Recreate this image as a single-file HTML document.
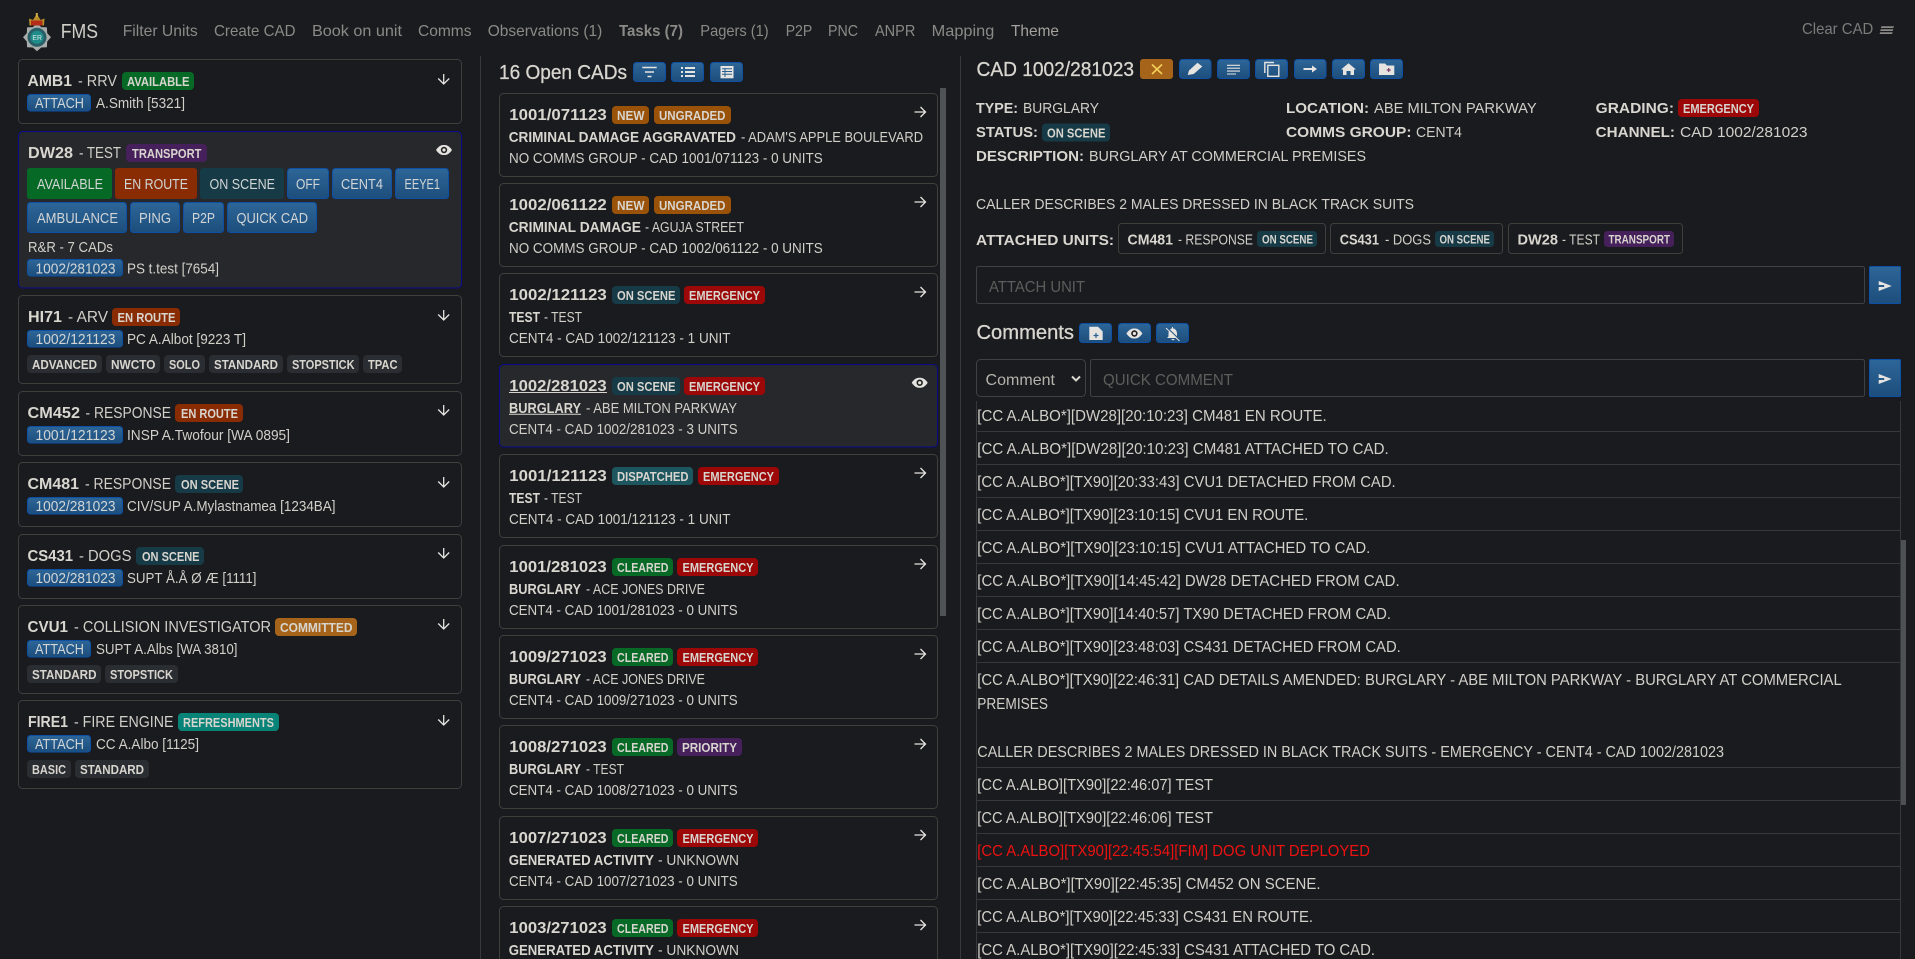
<!DOCTYPE html>
<html lang="en"><head><meta charset="utf-8"><title>FMS</title>
<style>
html,body{margin:0;padding:0;background:#191b1e;width:1915px;height:959px;overflow:hidden}
svg{display:block}
text{font-family:"Liberation Sans",sans-serif;fill:#d2cfc9;font-size:15px;white-space:pre}
.b{font-weight:700;fill:#d9d6d0}
.h{font-size:16px}
.hb{font-size:16px;font-weight:700;fill:#d9d6d0}
.n{font-size:16px;fill:#8b8a86}
.bt{font-size:14.5px;fill:#d2d5d6}
.bd{font-size:12.5px;font-weight:700;fill:#d8d5cf}
.bs{font-size:11.5px;font-weight:700;fill:#d8d5cf}
.c{font-size:15.5px}
.t{font-size:20px;stroke:#d9d6d0;stroke-width:.3;fill:#d9d6d0}
.ph{font-size:16px;fill:#5d5d5b}
.cd{fill:none;stroke:#3f3f3b}
.sel{fill:#26282b;stroke:#0a0a8a}
.bl{fill:url(#blg);stroke:#0d50a5}
.ic{fill:none;stroke:#e6e4e0;stroke-width:1.3}
.sp{stroke:#36393c;fill:none}
.gr{fill:#066a26}.or{fill:#9a5208}.te{fill:#163a46}.re{fill:#9c0707}.di{fill:#1e5660}.pu{fill:#45205a}.co{fill:#a5641a}.rf{fill:#078377}.er{fill:#8a2c03}.ch{fill:#2a2d31}
</style></head><body>
<svg xmlns="http://www.w3.org/2000/svg" width="1915" height="959" viewBox="0 0 1915 959">
<defs>
<linearGradient id="blg" x1="0" y1="0" x2="0" y2="1"><stop offset="0" stop-color="#2d6698"/><stop offset="1" stop-color="#1d4e7c"/></linearGradient>
<g id="ad" class="ic"><path d="M0-5V5M-5.5-.5L0 5L5.5-.5"/></g>
<g id="ar" class="ic"><path d="M-5.5 0H5.5M.5-5L5.5 0L.5 5"/></g>
<g id="ey"><path d="M-8 0C-5-4.5-2.5-5-0-5S5-4.5 8 0C5 4.5 2.5 5 0 5S-5 4.5-8 0Z" fill="#e6e4e0"/><circle r="3.2" fill="#222"/><circle r="1.6" fill="#e6e4e0"/></g>
<g id="sn"><path d="M-6.5-5L6.5 0L-6.5 5L-6.5 1H-1V-1H-6.5Z" fill="#e6e4e0"/></g>
</defs>
<rect width="1915" height="959" fill="#191b1e"/>

<!-- logo -->
<polygon points="51,37.3 47.2,41.5 46.9,47.2 41.2,47.5 37,51.3 32.8,47.5 27.1,47.2 26.8,41.5 23,37.3 26.8,33.1 27.1,27.4 32.8,27.1 37,23.3 41.2,27.1 46.9,27.4 47.2,33.1" fill="#a9adab"/>
<circle cx="37" cy="37.3" r="9.5" fill="#2a5f68"/><circle cx="37" cy="37.3" r="6.5" fill="#1f8d8a"/>
<text x="32.4" y="40" textLength="9.5" lengthAdjust="spacingAndGlyphs" style="font-size:7.5px;fill:#dfe8e8">ER</text>
<path d="M29.5 25.5L29 18.5L33 20L36.8 14L40.6 20L44.5 18.5L44 25.5Z" fill="#b8902a"/><path d="M31 25.5V20.5H42.5V25.5Z" fill="#b52c18"/><rect x="35.8" y="13" width="2" height="4" fill="#d4b04a"/>
<text x="60.7" y="38" textLength="37.3" lengthAdjust="spacingAndGlyphs" style="font-size:20px">FMS</text>

<!-- nav -->
<text class="n" x="122.7" y="36" textLength="75" lengthAdjust="spacingAndGlyphs">Filter Units</text>
<text class="n" x="214" y="36" textLength="81.5" lengthAdjust="spacingAndGlyphs">Create CAD</text>
<text class="n" x="312" y="36" textLength="90" lengthAdjust="spacingAndGlyphs">Book on unit</text>
<text class="n" x="418" y="36" textLength="53.5" lengthAdjust="spacingAndGlyphs">Comms</text>
<text class="n" x="487.7" y="36" textLength="114.6" lengthAdjust="spacingAndGlyphs">Observations (1)</text>
<text class="n b" x="619" y="36" textLength="64" lengthAdjust="spacingAndGlyphs" style="fill:#8b8a86">Tasks (7)</text>
<text class="n" x="700.3" y="36" textLength="68.4" lengthAdjust="spacingAndGlyphs">Pagers (1)</text>
<text class="n" x="785.7" y="36" textLength="26.5" lengthAdjust="spacingAndGlyphs">P2P</text>
<text class="n" x="828" y="36" textLength="30" lengthAdjust="spacingAndGlyphs">PNC</text>
<text class="n" x="875" y="36" textLength="40.3" lengthAdjust="spacingAndGlyphs">ANPR</text>
<text class="n" x="931.7" y="36" textLength="62.6" lengthAdjust="spacingAndGlyphs">Mapping</text>
<text class="n" x="1011" y="36" textLength="48" lengthAdjust="spacingAndGlyphs" style="fill:#a5a29d">Theme</text>
<text class="n" x="1802" y="34" textLength="71.3" lengthAdjust="spacingAndGlyphs" style="fill:#7b7b7a">Clear CAD</text>
<path d="M1881.5 26.2H1894L1893.3 28H1880.8ZM1880.8 29.2H1893.3L1892.6 31H1880.1ZM1880.2 32.2H1892.7L1892 34H1879.5Z" fill="#8b8a86"/>

<!-- dividers -->
<path class="sp" d="M480.5 56V959M960.5 56V959"/>

<!-- LEFT: UNITS -->
<rect class="cd" x="18.5" y="59.5" width="443" height="64" rx="4"/>
<text class="hb" x="27.5" y="86" textLength="44.5" lengthAdjust="spacingAndGlyphs">AMB1</text>
<text class="h" x="78" y="86" textLength="39" lengthAdjust="spacingAndGlyphs">- RRV</text>
<rect class="gr" x="122" y="72" width="72" height="18" rx="4"/><text class="bd" x="127" y="86" textLength="62.5" lengthAdjust="spacingAndGlyphs">AVAILABLE</text>
<rect class="bl" x="27.5" y="94.5" width="63" height="16.5" rx="3"/><text class="bt" x="35" y="108" textLength="49" lengthAdjust="spacingAndGlyphs">ATTACH</text>
<text x="96" y="108" textLength="89" lengthAdjust="spacingAndGlyphs">A.Smith [5321]</text>
<use href="#ad" x="443.7" y="79"/>

<rect class="sel" x="18.5" y="131.5" width="443" height="156.5" rx="4"/>
<text class="hb" x="28" y="158" textLength="45" lengthAdjust="spacingAndGlyphs">DW28</text>
<text class="h" x="79" y="158" textLength="42" lengthAdjust="spacingAndGlyphs">- TEST</text>
<rect class="pu" x="126" y="144" width="81" height="18" rx="4"/><text class="bd" x="132" y="158" textLength="69.5" lengthAdjust="spacingAndGlyphs">TRANSPORT</text>
<use href="#ey" x="444" y="150"/>
<rect class="gr" x="27" y="168" width="85" height="31" rx="3"/><text class="bt" x="37" y="189" textLength="66" lengthAdjust="spacingAndGlyphs">AVAILABLE</text>
<rect class="er" x="115" y="168" width="82" height="31" rx="3"/><text class="bt" x="124" y="189" textLength="64" lengthAdjust="spacingAndGlyphs">EN ROUTE</text>
<rect class="te" x="200" y="168" width="84" height="31" rx="3"/><text class="bt" x="209.5" y="189" textLength="65.5" lengthAdjust="spacingAndGlyphs">ON SCENE</text>
<rect class="bl" x="287.5" y="168.5" width="41" height="30" rx="3"/><text class="bt" x="296" y="189" textLength="24" lengthAdjust="spacingAndGlyphs">OFF</text>
<rect class="bl" x="332.5" y="168.5" width="59" height="30" rx="3"/><text class="bt" x="341" y="189" textLength="42" lengthAdjust="spacingAndGlyphs">CENT4</text>
<rect class="bl" x="395.5" y="168.5" width="53" height="30" rx="3"/><text class="bt" x="404.5" y="189" textLength="35.5" lengthAdjust="spacingAndGlyphs">EEYE1</text>
<rect class="bl" x="27.5" y="202.5" width="99" height="30" rx="3"/><text class="bt" x="37" y="223" textLength="81" lengthAdjust="spacingAndGlyphs">AMBULANCE</text>
<rect class="bl" x="130.5" y="202.5" width="49" height="30" rx="3"/><text class="bt" x="139" y="223" textLength="32" lengthAdjust="spacingAndGlyphs">PING</text>
<rect class="bl" x="183.5" y="202.5" width="40" height="30" rx="3"/><text class="bt" x="192" y="223" textLength="23" lengthAdjust="spacingAndGlyphs">P2P</text>
<rect class="bl" x="227.5" y="202.5" width="89" height="30" rx="3"/><text class="bt" x="236.5" y="223" textLength="71.5" lengthAdjust="spacingAndGlyphs">QUICK CAD</text>
<text x="28" y="252" textLength="85" lengthAdjust="spacingAndGlyphs">R&amp;R - 7 CADs</text>
<rect class="bl" x="27.5" y="259.5" width="95" height="16.5" rx="3"/><text class="bt" x="35.5" y="273.5" textLength="80" lengthAdjust="spacingAndGlyphs">1002/281023</text>
<text x="127" y="273.5" textLength="92" lengthAdjust="spacingAndGlyphs">PS t.test [7654]</text>

<rect class="cd" x="18.5" y="295.5" width="443" height="88" rx="4"/>
<text class="hb" x="28" y="322" textLength="34" lengthAdjust="spacingAndGlyphs">HI71</text>
<text class="h" x="68" y="322" textLength="40" lengthAdjust="spacingAndGlyphs">- ARV</text>
<rect class="er" x="112" y="308" width="68" height="18" rx="4"/><text class="bd" x="117.5" y="322" textLength="58" lengthAdjust="spacingAndGlyphs">EN ROUTE</text>
<use href="#ad" x="443.7" y="315"/>
<rect class="bl" x="27.5" y="330.5" width="95" height="16.5" rx="3"/><text class="bt" x="35.5" y="344" textLength="80" lengthAdjust="spacingAndGlyphs">1002/121123</text>
<text x="127" y="344" textLength="119" lengthAdjust="spacingAndGlyphs">PC A.Albot [9223 T]</text>
<rect class="ch" x="27" y="355" width="75" height="18" rx="4"/><text class="bd" x="32" y="369" textLength="65" lengthAdjust="spacingAndGlyphs">ADVANCED</text>
<rect class="ch" x="106" y="355" width="54" height="18" rx="4"/><text class="bd" x="111" y="369" textLength="44.5" lengthAdjust="spacingAndGlyphs">NWCTO</text>
<rect class="ch" x="164" y="355" width="41" height="18" rx="4"/><text class="bd" x="169" y="369" textLength="31" lengthAdjust="spacingAndGlyphs">SOLO</text>
<rect class="ch" x="209" y="355" width="74" height="18" rx="4"/><text class="bd" x="214" y="369" textLength="64" lengthAdjust="spacingAndGlyphs">STANDARD</text>
<rect class="ch" x="287" y="355" width="72" height="18" rx="4"/><text class="bd" x="292" y="369" textLength="62.5" lengthAdjust="spacingAndGlyphs">STOPSTICK</text>
<rect class="ch" x="363" y="355" width="39" height="18" rx="4"/><text class="bd" x="368" y="369" textLength="29.5" lengthAdjust="spacingAndGlyphs">TPAC</text>

<rect class="cd" x="18.5" y="391.5" width="443" height="64" rx="4"/>
<text class="hb" x="27.5" y="418" textLength="52.5" lengthAdjust="spacingAndGlyphs">CM452</text>
<text class="h" x="85.5" y="418" textLength="85.5" lengthAdjust="spacingAndGlyphs">- RESPONSE</text>
<rect class="er" x="175" y="404" width="68" height="18" rx="4"/><text class="bd" x="181" y="418" textLength="57" lengthAdjust="spacingAndGlyphs">EN ROUTE</text>
<use href="#ad" x="443.7" y="410"/>
<rect class="bl" x="27.5" y="426.5" width="95" height="16.5" rx="3"/><text class="bt" x="35.5" y="440" textLength="80" lengthAdjust="spacingAndGlyphs">1001/121123</text>
<text x="127" y="440" textLength="163" lengthAdjust="spacingAndGlyphs">INSP A.Twofour [WA 0895]</text>

<rect class="cd" x="18.5" y="462.5" width="443" height="64" rx="4"/>
<text class="hb" x="27.5" y="489" textLength="51.5" lengthAdjust="spacingAndGlyphs">CM481</text>
<text class="h" x="85" y="489" textLength="86" lengthAdjust="spacingAndGlyphs">- RESPONSE</text>
<rect class="te" x="175" y="475" width="68" height="18" rx="4"/><text class="bd" x="181" y="489" textLength="58" lengthAdjust="spacingAndGlyphs">ON SCENE</text>
<use href="#ad" x="443.7" y="482"/>
<rect class="bl" x="27.5" y="497.5" width="95" height="16.5" rx="3"/><text class="bt" x="35.5" y="511" textLength="80" lengthAdjust="spacingAndGlyphs">1002/281023</text>
<text x="127" y="511" textLength="208.5" lengthAdjust="spacingAndGlyphs">CIV/SUP A.Mylastnamea [1234BA]</text>

<rect class="cd" x="18.5" y="534.5" width="443" height="64" rx="4"/>
<text class="hb" x="27.5" y="561" textLength="45.5" lengthAdjust="spacingAndGlyphs">CS431</text>
<text class="h" x="79" y="561" textLength="52.5" lengthAdjust="spacingAndGlyphs">- DOGS</text>
<rect class="te" x="136" y="547" width="68" height="18" rx="4"/><text class="bd" x="142" y="561" textLength="57.5" lengthAdjust="spacingAndGlyphs">ON SCENE</text>
<use href="#ad" x="443.7" y="553"/>
<rect class="bl" x="27.5" y="569.5" width="95" height="16.5" rx="3"/><text class="bt" x="35.5" y="583" textLength="80" lengthAdjust="spacingAndGlyphs">1002/281023</text>
<text x="127" y="583" textLength="129.5" lengthAdjust="spacingAndGlyphs">SUPT Å.Å Ø Æ [1111]</text>

<rect class="cd" x="18.5" y="605.5" width="443" height="88" rx="4"/>
<text class="hb" x="27.5" y="632" textLength="40.5" lengthAdjust="spacingAndGlyphs">CVU1</text>
<text class="h" x="74" y="632" textLength="197" lengthAdjust="spacingAndGlyphs">- COLLISION INVESTIGATOR</text>
<rect class="co" x="275" y="618" width="82" height="18" rx="4"/><text class="bd" x="280" y="632" textLength="72.5" lengthAdjust="spacingAndGlyphs">COMMITTED</text>
<use href="#ad" x="443.7" y="624"/>
<rect class="bl" x="27.5" y="640.5" width="63" height="16.5" rx="3"/><text class="bt" x="35" y="654" textLength="49" lengthAdjust="spacingAndGlyphs">ATTACH</text>
<text x="96" y="654" textLength="141.5" lengthAdjust="spacingAndGlyphs">SUPT A.Albs [WA 3810]</text>
<rect class="ch" x="27" y="665" width="74" height="18" rx="4"/><text class="bd" x="32" y="679" textLength="64.5" lengthAdjust="spacingAndGlyphs">STANDARD</text>
<rect class="ch" x="105" y="665" width="73" height="18" rx="4"/><text class="bd" x="110" y="679" textLength="63" lengthAdjust="spacingAndGlyphs">STOPSTICK</text>

<rect class="cd" x="18.5" y="700.5" width="443" height="88" rx="4"/>
<text class="hb" x="28" y="727" textLength="40" lengthAdjust="spacingAndGlyphs">FIRE1</text>
<text class="h" x="74" y="727" textLength="99.5" lengthAdjust="spacingAndGlyphs">- FIRE ENGINE</text>
<rect class="rf" x="178" y="713" width="101" height="18" rx="4"/><text class="bd" x="183" y="727" textLength="91" lengthAdjust="spacingAndGlyphs">REFRESHMENTS</text>
<use href="#ad" x="443.7" y="720"/>
<rect class="bl" x="27.5" y="735.5" width="63" height="16.5" rx="3"/><text class="bt" x="35" y="749" textLength="49" lengthAdjust="spacingAndGlyphs">ATTACH</text>
<text x="96" y="749" textLength="103" lengthAdjust="spacingAndGlyphs">CC A.Albo [1125]</text>
<rect class="ch" x="27" y="760" width="44" height="18" rx="4"/><text class="bd" x="32" y="774" textLength="34" lengthAdjust="spacingAndGlyphs">BASIC</text>
<rect class="ch" x="75" y="760" width="74" height="18" rx="4"/><text class="bd" x="80" y="774" textLength="64" lengthAdjust="spacingAndGlyphs">STANDARD</text>

<!-- MIDDLE -->
<text class="t" x="499" y="79" textLength="128" lengthAdjust="spacingAndGlyphs">16 Open CADs</text>
<rect class="bl" x="633.5" y="62.5" width="32" height="19" rx="3"/><path d="M642.3 67.5H656.7M645 72H654M647.5 76.5H651.5" stroke="#e6e4e0" stroke-width="1.6" fill="none"/>
<rect class="bl" x="671.5" y="62.5" width="32" height="19" rx="3"/><path d="M681 68H683M685 68H695M681 72H683M685 72H695M681 76H683M685 76H695" stroke="#e6e4e0" stroke-width="2" fill="none"/>
<rect class="bl" x="710.5" y="62.5" width="32" height="19" rx="3"/><rect x="720.5" y="66" width="13" height="12.3" fill="#e6e4e0"/><path d="M722 68.8H732M722 71.5H732M722 74.2H732M725 68V77" stroke="#2a6090" stroke-width="1" fill="none"/>
<rect x="940" y="88" width="6" height="528" fill="#4f5356"/>

<g transform="translate(0,93)"><rect class="cd" x="499.5" y=".5" width="438" height="83" rx="4"/>
<text class="hb" x="509.3" y="27" textLength="97.4" lengthAdjust="spacingAndGlyphs">1001/071123</text>
<rect class="or" x="612" y="13" width="37" height="18" rx="4"/><text class="bd" x="617" y="27" textLength="27.5" lengthAdjust="spacingAndGlyphs">NEW</text>
<rect class="or" x="654" y="13" width="77" height="18" rx="4"/><text class="bd" x="659" y="27" textLength="66.5" lengthAdjust="spacingAndGlyphs">UNGRADED</text>
<use href="#ar" x="920" y="19"/>
<text class="b" x="508.7" y="49" textLength="227.3" lengthAdjust="spacingAndGlyphs">CRIMINAL DAMAGE AGGRAVATED</text>
<text x="741" y="49" textLength="182" lengthAdjust="spacingAndGlyphs">- ADAM'S APPLE BOULEVARD</text>
<text x="509" y="69.8" textLength="313.7" lengthAdjust="spacingAndGlyphs">NO COMMS GROUP - CAD 1001/071123 - 0 UNITS</text></g>

<g transform="translate(0,183)"><rect class="cd" x="499.5" y=".5" width="438" height="83" rx="4"/>
<text class="hb" x="509.3" y="27" textLength="97.4" lengthAdjust="spacingAndGlyphs">1002/061122</text>
<rect class="or" x="612" y="13" width="37" height="18" rx="4"/><text class="bd" x="617" y="27" textLength="27.5" lengthAdjust="spacingAndGlyphs">NEW</text>
<rect class="or" x="654" y="13" width="77" height="18" rx="4"/><text class="bd" x="659" y="27" textLength="66.5" lengthAdjust="spacingAndGlyphs">UNGRADED</text>
<use href="#ar" x="920" y="19"/>
<text class="b" x="508.7" y="49" textLength="132.3" lengthAdjust="spacingAndGlyphs">CRIMINAL DAMAGE</text>
<text x="645" y="49" textLength="99" lengthAdjust="spacingAndGlyphs">- AGUJA STREET</text>
<text x="509" y="69.8" textLength="313.7" lengthAdjust="spacingAndGlyphs">NO COMMS GROUP - CAD 1002/061122 - 0 UNITS</text></g>

<g transform="translate(0,273)"><rect class="cd" x="499.5" y=".5" width="438" height="83" rx="4"/>
<text class="hb" x="509.3" y="27" textLength="97.4" lengthAdjust="spacingAndGlyphs">1002/121123</text>
<rect class="te" x="612" y="13" width="68" height="18" rx="4"/><text class="bd" x="617" y="27" textLength="58.5" lengthAdjust="spacingAndGlyphs">ON SCENE</text>
<rect class="re" x="684" y="13" width="81" height="18" rx="4"/><text class="bd" x="689" y="27" textLength="71" lengthAdjust="spacingAndGlyphs">EMERGENCY</text>
<use href="#ar" x="920" y="19"/>
<text class="b" x="509" y="49" textLength="31" lengthAdjust="spacingAndGlyphs">TEST</text>
<text x="544" y="49" textLength="38" lengthAdjust="spacingAndGlyphs">- TEST</text>
<text x="509" y="69.8" textLength="221.5" lengthAdjust="spacingAndGlyphs">CENT4 - CAD 1002/121123 - 1 UNIT</text></g>

<g transform="translate(0,364)"><rect class="sel" x="499.5" y=".5" width="438" height="82.5" rx="4"/>
<text class="hb" x="509.3" y="27" textLength="97.4" lengthAdjust="spacingAndGlyphs">1002/281023</text><path d="M509 28.5H607M509 50.2H581" stroke="#d9d6d0" stroke-width="1"/>
<rect class="te" x="612" y="13" width="68" height="18" rx="4"/><text class="bd" x="617" y="27" textLength="58.5" lengthAdjust="spacingAndGlyphs">ON SCENE</text>
<rect class="re" x="684" y="13" width="81" height="18" rx="4"/><text class="bd" x="689" y="27" textLength="71" lengthAdjust="spacingAndGlyphs">EMERGENCY</text>
<use href="#ey" x="919.7" y="18.7"/>
<text class="b" x="509" y="49" textLength="72" lengthAdjust="spacingAndGlyphs">BURGLARY</text>
<text x="586" y="49" textLength="151" lengthAdjust="spacingAndGlyphs">- ABE MILTON PARKWAY</text>
<text x="509" y="69.8" textLength="228.7" lengthAdjust="spacingAndGlyphs">CENT4 - CAD 1002/281023 - 3 UNITS</text></g>

<g transform="translate(0,454)"><rect class="cd" x="499.5" y=".5" width="438" height="83" rx="4"/>
<text class="hb" x="509.3" y="27" textLength="97.4" lengthAdjust="spacingAndGlyphs">1001/121123</text>
<rect class="di" x="612" y="13" width="81" height="18" rx="4"/><text class="bd" x="617" y="27" textLength="71.5" lengthAdjust="spacingAndGlyphs">DISPATCHED</text>
<rect class="re" x="698" y="13" width="81" height="18" rx="4"/><text class="bd" x="703" y="27" textLength="71" lengthAdjust="spacingAndGlyphs">EMERGENCY</text>
<use href="#ar" x="920" y="19"/>
<text class="b" x="509" y="49" textLength="31" lengthAdjust="spacingAndGlyphs">TEST</text>
<text x="544" y="49" textLength="38" lengthAdjust="spacingAndGlyphs">- TEST</text>
<text x="509" y="69.8" textLength="221.5" lengthAdjust="spacingAndGlyphs">CENT4 - CAD 1001/121123 - 1 UNIT</text></g>

<g transform="translate(0,545)"><rect class="cd" x="499.5" y=".5" width="438" height="83" rx="4"/>
<text class="hb" x="509.3" y="27" textLength="97.4" lengthAdjust="spacingAndGlyphs">1001/281023</text>
<rect class="gr" x="612" y="13" width="61" height="18" rx="4"/><text class="bd" x="617" y="27" textLength="51.5" lengthAdjust="spacingAndGlyphs">CLEARED</text>
<rect class="re" x="677" y="13" width="81" height="18" rx="4"/><text class="bd" x="682.5" y="27" textLength="71" lengthAdjust="spacingAndGlyphs">EMERGENCY</text>
<use href="#ar" x="920" y="19"/>
<text class="b" x="509" y="49" textLength="72" lengthAdjust="spacingAndGlyphs">BURGLARY</text>
<text x="586" y="49" textLength="119" lengthAdjust="spacingAndGlyphs">- ACE JONES DRIVE</text>
<text x="509" y="69.8" textLength="228.7" lengthAdjust="spacingAndGlyphs">CENT4 - CAD 1001/281023 - 0 UNITS</text></g>

<g transform="translate(0,635)"><rect class="cd" x="499.5" y=".5" width="438" height="83" rx="4"/>
<text class="hb" x="509.3" y="27" textLength="97.4" lengthAdjust="spacingAndGlyphs">1009/271023</text>
<rect class="gr" x="612" y="13" width="61" height="18" rx="4"/><text class="bd" x="617" y="27" textLength="51.5" lengthAdjust="spacingAndGlyphs">CLEARED</text>
<rect class="re" x="677" y="13" width="81" height="18" rx="4"/><text class="bd" x="682.5" y="27" textLength="71" lengthAdjust="spacingAndGlyphs">EMERGENCY</text>
<use href="#ar" x="920" y="19"/>
<text class="b" x="509" y="49" textLength="72" lengthAdjust="spacingAndGlyphs">BURGLARY</text>
<text x="586" y="49" textLength="119" lengthAdjust="spacingAndGlyphs">- ACE JONES DRIVE</text>
<text x="509" y="69.8" textLength="228.7" lengthAdjust="spacingAndGlyphs">CENT4 - CAD 1009/271023 - 0 UNITS</text></g>

<g transform="translate(0,725)"><rect class="cd" x="499.5" y=".5" width="438" height="83" rx="4"/>
<text class="hb" x="509.3" y="27" textLength="97.4" lengthAdjust="spacingAndGlyphs">1008/271023</text>
<rect class="gr" x="612" y="13" width="61" height="18" rx="4"/><text class="bd" x="617" y="27" textLength="51.5" lengthAdjust="spacingAndGlyphs">CLEARED</text>
<rect class="pu" x="677" y="13" width="65" height="18" rx="4"/><text class="bd" x="682" y="27" textLength="55" lengthAdjust="spacingAndGlyphs">PRIORITY</text>
<use href="#ar" x="920" y="19"/>
<text class="b" x="509" y="49" textLength="72" lengthAdjust="spacingAndGlyphs">BURGLARY</text>
<text x="586" y="49" textLength="38" lengthAdjust="spacingAndGlyphs">- TEST</text>
<text x="509" y="69.8" textLength="228.7" lengthAdjust="spacingAndGlyphs">CENT4 - CAD 1008/271023 - 0 UNITS</text></g>

<g transform="translate(0,816)"><rect class="cd" x="499.5" y=".5" width="438" height="83" rx="4"/>
<text class="hb" x="509.3" y="27" textLength="97.4" lengthAdjust="spacingAndGlyphs">1007/271023</text>
<rect class="gr" x="612" y="13" width="61" height="18" rx="4"/><text class="bd" x="617" y="27" textLength="51.5" lengthAdjust="spacingAndGlyphs">CLEARED</text>
<rect class="re" x="677" y="13" width="81" height="18" rx="4"/><text class="bd" x="682.5" y="27" textLength="71" lengthAdjust="spacingAndGlyphs">EMERGENCY</text>
<use href="#ar" x="920" y="19"/>
<text class="b" x="508.7" y="49" textLength="145.3" lengthAdjust="spacingAndGlyphs">GENERATED ACTIVITY</text>
<text x="658" y="49" textLength="81" lengthAdjust="spacingAndGlyphs">- UNKNOWN</text>
<text x="509" y="69.8" textLength="228.7" lengthAdjust="spacingAndGlyphs">CENT4 - CAD 1007/271023 - 0 UNITS</text></g>

<g transform="translate(0,906)"><rect class="cd" x="499.5" y=".5" width="438" height="83" rx="4"/>
<text class="hb" x="509.3" y="27" textLength="97.4" lengthAdjust="spacingAndGlyphs">1003/271023</text>
<rect class="gr" x="612" y="13" width="61" height="18" rx="4"/><text class="bd" x="617" y="27" textLength="51.5" lengthAdjust="spacingAndGlyphs">CLEARED</text>
<rect class="re" x="677" y="13" width="81" height="18" rx="4"/><text class="bd" x="682.5" y="27" textLength="71" lengthAdjust="spacingAndGlyphs">EMERGENCY</text>
<use href="#ar" x="920" y="19"/>
<text class="b" x="508.7" y="49" textLength="145.3" lengthAdjust="spacingAndGlyphs">GENERATED ACTIVITY</text>
<text x="658" y="49" textLength="81" lengthAdjust="spacingAndGlyphs">- UNKNOWN</text></g>

<!-- RIGHT -->
<text class="t" x="976.5" y="76" textLength="157.5" lengthAdjust="spacingAndGlyphs">CAD 1002/281023</text>
<rect x="1140" y="59" width="33" height="20" rx="3" fill="#a5641a"/><path d="M1152 64.5L1162 74M1162 64.5L1152 74" stroke="#f3cf5a" stroke-width="1.6"/>
<rect class="bl" x="1179.5" y="59.5" width="31.5" height="19" rx="3"/><path d="M1187.7 75L1189 70.5L1197.5 62.8L1202.3 66.5L1193.7 74Z" fill="#e6e4e0"/>
<rect class="bl" x="1217.5" y="59.5" width="32" height="19" rx="3"/><path d="M1227 65.3H1240M1227 68.2H1240M1227 71.1H1240M1227 74H1236" stroke="#e6e4e0" stroke-width="1.1" fill="none"/>
<rect class="bl" x="1255.5" y="59.5" width="32" height="19" rx="3"/><path d="M1264.8 73V62.5H1274" stroke="#e6e4e0" stroke-width="1.4" fill="none"/><rect x="1267.8" y="65.3" width="11" height="11" stroke="#e6e4e0" stroke-width="1.4" fill="none"/>
<rect class="bl" x="1294.5" y="59.5" width="31.5" height="19" rx="3"/><path d="M1303.5 69H1313" stroke="#e6e4e0" stroke-width="2"/><path d="M1312 65.5L1317 69L1312 72.5Z" fill="#e6e4e0"/>
<rect class="bl" x="1332.5" y="59.5" width="32" height="19" rx="3"/><path d="M1348.5 63.3L1356 69.5H1354V75H1350.5V71H1346.5V75H1343V69.5H1341Z" fill="#e6e4e0"/>
<rect class="bl" x="1370.5" y="59.5" width="32" height="19" rx="3"/><path d="M1379 75V63.5H1385L1387 65.5H1394.3V75Z" fill="#e6e4e0"/><path d="M1386.7 70H1390.7M1388.7 68V72" stroke="#7a3a6a" stroke-width="1.2"/>

<text class="b" x="976" y="113" textLength="42" lengthAdjust="spacingAndGlyphs">TYPE:</text>
<text x="1023" y="113" textLength="76" lengthAdjust="spacingAndGlyphs">BURGLARY</text>
<text class="b" x="1286" y="113" textLength="83" lengthAdjust="spacingAndGlyphs">LOCATION:</text>
<text x="1374" y="113" textLength="162.7" lengthAdjust="spacingAndGlyphs">ABE MILTON PARKWAY</text>
<text class="b" x="1595.7" y="113" textLength="78.3" lengthAdjust="spacingAndGlyphs">GRADING:</text>
<rect class="re" x="1678" y="99" width="81" height="18" rx="4"/><text class="bd" x="1683" y="113" textLength="71" lengthAdjust="spacingAndGlyphs">EMERGENCY</text>
<text class="b" x="976" y="137" textLength="62" lengthAdjust="spacingAndGlyphs">STATUS:</text>
<rect class="te" x="1042" y="123.5" width="68" height="18" rx="4"/><text class="bd" x="1047" y="137.5" textLength="58.5" lengthAdjust="spacingAndGlyphs">ON SCENE</text>
<text class="b" x="1286" y="137" textLength="125.5" lengthAdjust="spacingAndGlyphs">COMMS GROUP:</text>
<text x="1416" y="137" textLength="46" lengthAdjust="spacingAndGlyphs">CENT4</text>
<text class="b" x="1595.7" y="137" textLength="79.3" lengthAdjust="spacingAndGlyphs">CHANNEL:</text>
<text x="1680" y="137" textLength="127.5" lengthAdjust="spacingAndGlyphs">CAD 1002/281023</text>
<text class="b" x="976" y="161" textLength="108" lengthAdjust="spacingAndGlyphs">DESCRIPTION:</text>
<text x="1089" y="161" textLength="277" lengthAdjust="spacingAndGlyphs">BURGLARY AT COMMERCIAL PREMISES</text>
<text x="976" y="209" textLength="438" lengthAdjust="spacingAndGlyphs">CALLER DESCRIBES 2 MALES DRESSED IN BLACK TRACK SUITS</text>
<text class="b" x="976" y="245" textLength="138" lengthAdjust="spacingAndGlyphs">ATTACHED UNITS:</text>

<rect class="cd" x="1118.5" y="223.5" width="207" height="30" rx="3"/>
<text class="b" x="1127.5" y="244.5" textLength="45.5" lengthAdjust="spacingAndGlyphs">CM481</text>
<text x="1178" y="244.5" textLength="75" lengthAdjust="spacingAndGlyphs">- RESPONSE</text>
<rect class="te" x="1257" y="231" width="60" height="16" rx="3.5"/><text class="bs" x="1262" y="243.5" textLength="51" lengthAdjust="spacingAndGlyphs">ON SCENE</text>
<rect class="cd" x="1330.5" y="223.5" width="172" height="30" rx="3"/>
<text class="b" x="1339.7" y="244.5" textLength="39.3" lengthAdjust="spacingAndGlyphs">CS431</text>
<text x="1385" y="244.5" textLength="46" lengthAdjust="spacingAndGlyphs">- DOGS</text>
<rect class="te" x="1435" y="231" width="59" height="16" rx="3.5"/><text class="bs" x="1439.5" y="243.5" textLength="50.5" lengthAdjust="spacingAndGlyphs">ON SCENE</text>
<rect class="cd" x="1508.5" y="223.5" width="174" height="30" rx="3"/>
<text class="b" x="1517.5" y="244.5" textLength="40.5" lengthAdjust="spacingAndGlyphs">DW28</text>
<text x="1562" y="244.5" textLength="38" lengthAdjust="spacingAndGlyphs">- TEST</text>
<rect class="pu" x="1604" y="231" width="70" height="16" rx="3.5"/><text class="bs" x="1608.5" y="243.5" textLength="61.5" lengthAdjust="spacingAndGlyphs">TRANSPORT</text>

<rect class="cd" x="976.5" y="266.5" width="888" height="37" rx="2" style="stroke:#3f4245"/>
<text class="ph" x="989" y="292" textLength="96" lengthAdjust="spacingAndGlyphs">ATTACH UNIT</text>
<rect class="bl" x="1869.5" y="266.5" width="31" height="37" rx="1"/><use href="#sn" x="1885.2" y="286"/>

<text class="t" x="976.5" y="339" textLength="97.5" lengthAdjust="spacingAndGlyphs">Comments</text>
<rect class="bl" x="1079.5" y="323.5" width="32" height="19" rx="3"/><path d="M1089.3 326.7H1098L1102.7 331.4V340H1089.3Z" fill="#e6e4e0"/><path d="M1093.5 335.5H1098.5M1096 333V338" stroke="#2a6090" stroke-width="1.2"/>
<rect class="bl" x="1118.5" y="323.5" width="32" height="19" rx="3"/><use href="#ey" x="1134.4" y="333.5"/>
<rect class="bl" x="1156.5" y="323.5" width="32" height="19" rx="3"/><path d="M1173 327V328.3C1175.8 329 1177 331 1177 334V336.5L1178.8 338H1167L1168.5 336.5V334C1168.5 331 1170 329 1172 328.3V327Z" fill="#e6e4e0"/><path d="M1171 339H1175L1173 340.5Z" fill="#e6e4e0"/><path d="M1166.5 327L1180 340" stroke="#1f4f7e" stroke-width="1.1"/><path d="M1166 328L1179.5 341" stroke="#e6e4e0" stroke-width="1"/>

<rect class="cd" x="976.5" y="359.5" width="109" height="37" rx="4" style="stroke:#3f4245"/>
<text x="985.5" y="385" textLength="69.5" lengthAdjust="spacingAndGlyphs" style="font-size:16px;fill:#b5b2ac">Comment</text>
<path d="M1072 376.5L1076 380.5L1080 376.5" stroke="#d9d6d0" stroke-width="2" fill="none"/>
<rect class="cd" x="1090.5" y="359.5" width="774" height="37" rx="2" style="stroke:#3f4245"/>
<text class="ph" x="1103" y="385" textLength="130" lengthAdjust="spacingAndGlyphs">QUICK COMMENT</text>
<rect class="bl" x="1869.5" y="359.5" width="31" height="37" rx="1"/><use href="#sn" x="1885.2" y="379"/>

<!-- comments -->
<path class="sp" d="M976.5 401V959M1900.5 401V959M977 431.5H1900M977 464.5H1900M977 497.5H1900M977 530.5H1900M977 563.5H1900M977 596.5H1900M977 629.5H1900M977 662.5H1900M977 767.5H1900M977 800.5H1900M977 833.5H1900M977 866.5H1900M977 899.5H1900M977 932.5H1900"/>
<rect x="1901" y="540" width="5" height="265" fill="#4d5154"/>
<text class="c" x="977.3" y="421" textLength="349.4" lengthAdjust="spacingAndGlyphs">[CC A.ALBO*][DW28][20:10:23] CM481 EN ROUTE.</text>
<text class="c" x="977.3" y="454" textLength="411.4" lengthAdjust="spacingAndGlyphs">[CC A.ALBO*][DW28][20:10:23] CM481 ATTACHED TO CAD.</text>
<text class="c" x="977.3" y="487" textLength="418.4" lengthAdjust="spacingAndGlyphs">[CC A.ALBO*][TX90][20:33:43] CVU1 DETACHED FROM CAD.</text>
<text class="c" x="977.3" y="520" textLength="331" lengthAdjust="spacingAndGlyphs">[CC A.ALBO*][TX90][23:10:15] CVU1 EN ROUTE.</text>
<text class="c" x="977.3" y="553" textLength="393" lengthAdjust="spacingAndGlyphs">[CC A.ALBO*][TX90][23:10:15] CVU1 ATTACHED TO CAD.</text>
<text class="c" x="977.3" y="586" textLength="422.3" lengthAdjust="spacingAndGlyphs">[CC A.ALBO*][TX90][14:45:42] DW28 DETACHED FROM CAD.</text>
<text class="c" x="977.3" y="619" textLength="413.7" lengthAdjust="spacingAndGlyphs">[CC A.ALBO*][TX90][14:40:57] TX90 DETACHED FROM CAD.</text>
<text class="c" x="977.3" y="652" textLength="423.5" lengthAdjust="spacingAndGlyphs">[CC A.ALBO*][TX90][23:48:03] CS431 DETACHED FROM CAD.</text>
<text class="c" x="977.3" y="685" textLength="864.4" lengthAdjust="spacingAndGlyphs">[CC A.ALBO*][TX90][22:46:31] CAD DETAILS AMENDED: BURGLARY - ABE MILTON PARKWAY - BURGLARY AT COMMERCIAL</text>
<text class="c" x="977.3" y="709" textLength="70.7" lengthAdjust="spacingAndGlyphs">PREMISES</text>
<text class="c" x="977.3" y="757" textLength="746.7" lengthAdjust="spacingAndGlyphs">CALLER DESCRIBES 2 MALES DRESSED IN BLACK TRACK SUITS - EMERGENCY - CENT4 - CAD 1002/281023</text>
<text class="c" x="977.3" y="790" textLength="235.7" lengthAdjust="spacingAndGlyphs">[CC A.ALBO][TX90][22:46:07] TEST</text>
<text class="c" x="977.3" y="823" textLength="235.7" lengthAdjust="spacingAndGlyphs">[CC A.ALBO][TX90][22:46:06] TEST</text>
<text class="c" x="977.3" y="856" textLength="392.7" lengthAdjust="spacingAndGlyphs" style="fill:#ee1111">[CC A.ALBO][TX90][22:45:54][FIM] DOG UNIT DEPLOYED</text>
<text class="c" x="977.3" y="889" textLength="343.2" lengthAdjust="spacingAndGlyphs">[CC A.ALBO*][TX90][22:45:35] CM452 ON SCENE.</text>
<text class="c" x="977.3" y="922" textLength="335.7" lengthAdjust="spacingAndGlyphs">[CC A.ALBO*][TX90][22:45:33] CS431 EN ROUTE.</text>
<text class="c" x="977.3" y="955" textLength="397.7" lengthAdjust="spacingAndGlyphs">[CC A.ALBO*][TX90][22:45:33] CS431 ATTACHED TO CAD.</text>
</svg>
</body></html>
